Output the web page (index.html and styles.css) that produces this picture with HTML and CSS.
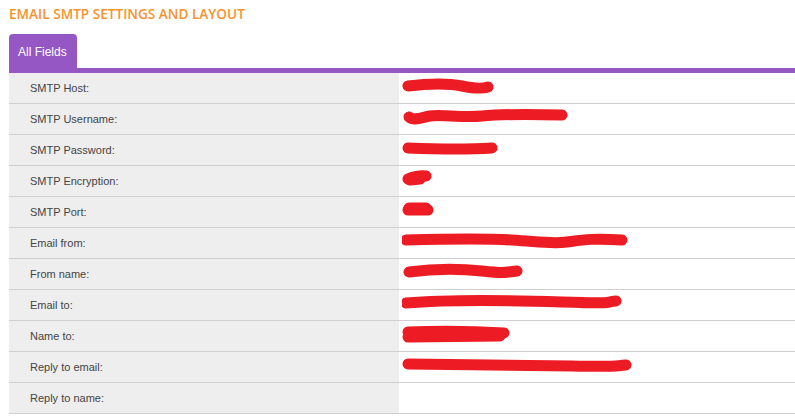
FILE: index.html
```html
<!DOCTYPE html>
<html>
<head>
<meta charset="utf-8">
<link rel="stylesheet" href="styles.css">
</head>
<body>
<div class="page">
  <h1 class="title">EMAIL SMTP SETTINGS AND LAYOUT</h1>
  <div class="tabs">
    <div class="tab">All Fields</div>
  </div>
  <table class="fields">
    <tr><td class="label">SMTP Host:</td><td class="value"><svg class="scrib" width="260" height="30"><path d="M6 13 C30 10 50 11 60 13 S80 16 86 14"/></svg></td></tr>
    <tr><td class="label">SMTP Username:</td><td class="value"><svg class="scrib" width="260" height="30"><path d="M7 13 C12 17 18 14 28 12 S60 14 80 12 S120 10 160 11"/></svg></td></tr>
    <tr><td class="label">SMTP Password:</td><td class="value"><svg class="scrib" width="260" height="30"><path d="M6 13 C30 14 60 15 90 13"/></svg></td></tr>
    <tr><td class="label">SMTP Encryption:</td><td class="value"><svg class="scrib" width="260" height="30"><path d="M6 13 C10 11 18 9 24 10"/><path d="M8 14 L18 13"/></svg></td></tr>
    <tr><td class="label">SMTP Port:</td><td class="value"><svg class="scrib" width="260" height="30"><path d="M6 13 L26 13"/><path d="M7 11 L24 11"/></svg></td></tr>
    <tr><td class="label">Email from:</td><td class="value"><svg class="scrib" width="260" height="30"><path d="M4 12 C40 11 80 10 110 12 S150 16 165 14 S190 10 220 12"/></svg></td></tr>
    <tr><td class="label">From name:</td><td class="value"><svg class="scrib" width="260" height="30"><path d="M7 13 C30 10 60 10 80 12 S100 14 115 12"/></svg></td></tr>
    <tr><td class="label">Email to:</td><td class="value"><svg class="scrib" width="260" height="30"><path d="M4 13 C40 10 100 10 160 12 S200 12 214 11"/></svg></td></tr>
    <tr><td class="label">Name to:</td><td class="value"><svg class="scrib" width="260" height="30"><path d="M6 11 C30 10 70 10 102 12"/><path d="M6 16 L98 15"/></svg></td></tr>
    <tr><td class="label">Reply to email:</td><td class="value"><svg class="scrib" width="260" height="30"><path d="M6 12 C60 13 120 13 170 14 S210 14 224 13"/></svg></td></tr>
    <tr><td class="label">Reply to name:</td><td class="value"></td></tr>
  </table>
</div>
</body>
</html>
```
FILE: styles.css
```css
html, body {
  margin: 0;
  padding: 0;
  background: #fff;
}
.page {
  padding: 0 0 0 9px;
}
.title {
  margin: 0;
  padding-top: 5px;
  height: 29px;
  box-sizing: border-box;
  font-family: "Open Sans", "Liberation Sans", sans-serif;
  font-weight: 600;
  font-size: 13.6px;
  color: #f7922c;
  line-height: 18px;
}
.tabs {
  display: flex;
  height: 34px;
  align-items: flex-end;
  border-bottom: 5px solid #9557c4;
  margin-top: 5px;
}
.tab {
  background: #9557c4;
  color: #fff;
  font-family: "Liberation Sans", Arial, sans-serif;
  font-size: 12px;
  height: 34px;
  line-height: 36px;
  padding: 0 10px 0 9px;
  border-radius: 4px 4px 0 0;
  box-sizing: border-box;
}
.fields {
  width: 100%;
  border-collapse: collapse;
  font-family: "Liberation Sans", Arial, sans-serif;
  font-size: 11px;
  color: #444;
}
.fields td {
  height: 30px;
  padding: 0;
  border-bottom: 1px solid #cfcfcf;
  vertical-align: middle;
}
.label {
  width: 369px;
  padding-left: 21px !important;
  background: #eeeeee;
}
.value {
  background: #fff;
}
.scrib {
  display: block;
  margin-left: 3px;
  fill: none;
  stroke: #ed1c24;
  stroke-width: 11;
  stroke-linecap: round;
  stroke-linejoin: round;
}
```
